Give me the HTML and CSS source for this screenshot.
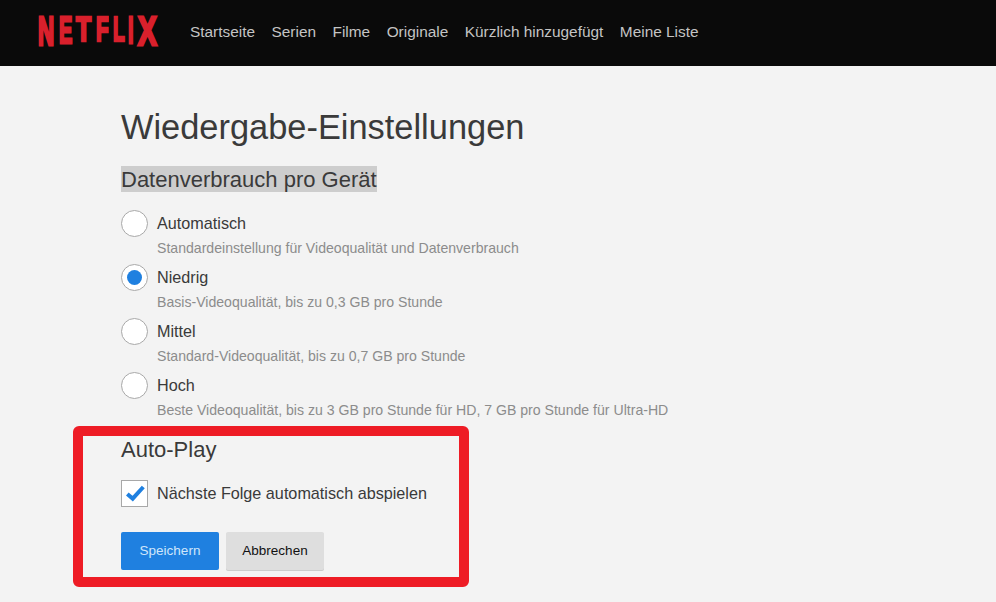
FILE: index.html
```html
<!DOCTYPE html>
<html lang="de">

<head>
    <meta charset="UTF-8">
    <title>Wiedergabe-Einstellungen</title>
    <link rel="stylesheet" href="styles.css">
</head>

<body>

    <header class="topbar">
        <div class="logo"><span class="l-n">N</span><span class="l-e">E</span><span class="l-t">T</span><span class="l-f">F</span><span class="l-l">L</span><span class="l-i">I</span><span class="l-x">X</span></div>
        <nav class="nav">
            <a href="#">Startseite</a>
            <a href="#">Serien</a>
            <a href="#">Filme</a>
            <a href="#">Originale</a>
            <a href="#">Kürzlich hinzugefügt</a>
            <a href="#">Meine Liste</a>
        </nav>
    </header>

    <main class="content">
        <h1>Wiedergabe-Einstellungen</h1>
        <h2><span class="selected">Datenverbrauch pro Gerät</span></h2>

        <div class="options">
            <div class="option">
                <span class="radio"></span>
                <div>
                    <div class="option-name">Automatisch</div>
                    <div class="option-desc">Standardeinstellung für Videoqualität und Datenverbrauch</div>
                </div>
            </div>
            <div class="option">
                <span class="radio checked"></span>
                <div>
                    <div class="option-name">Niedrig</div>
                    <div class="option-desc">Basis-Videoqualität, bis zu 0,3 GB pro Stunde</div>
                </div>
            </div>
            <div class="option">
                <span class="radio"></span>
                <div>
                    <div class="option-name">Mittel</div>
                    <div class="option-desc">Standard-Videoqualität, bis zu 0,7 GB pro Stunde</div>
                </div>
            </div>
            <div class="option">
                <span class="radio"></span>
                <div>
                    <div class="option-name">Hoch</div>
                    <div class="option-desc">Beste Videoqualität, bis zu 3 GB pro Stunde für HD, 7 GB pro Stunde für Ultra-HD</div>
                </div>
            </div>
        </div>

        <h2 class="autoplay-title">Auto-Play</h2>
        <div class="autoplay">
            <span class="checkbox">
                <svg width="25" height="25" viewBox="0 0 25 25">
                    <path d="M5.3 13l5.4 4.6L21.3 6" fill="none" stroke="#1f80e0" stroke-width="4"/>
                </svg>
            </span>
            <span class="option-name">Nächste Folge automatisch abspielen</span>
        </div>

        <div class="buttons">
            <button type="button" class="btn btn-save">Speichern</button>
            <button type="button" class="btn btn-cancel">Abbrechen</button>
        </div>
    </main>

    <div class="highlight"></div>

</body>

</html>
```

FILE: styles.css
```css
* {
    box-sizing: border-box;
}

body {
    font-family: "Liberation Sans", Arial, sans-serif;
    background-color: #f3f3f3;
    margin: 0;
    padding: 0;
    height: 602px;
    overflow: hidden;
    position: relative;
}

.topbar {
    height: 66px;
    background-color: #0a0a0a;
    display: flex;
    align-items: center;
    padding-left: 38px;
}

.logo {
    width: 119px;
    height: 34px;
    margin-right: 33px;
    margin-top: -5px;
    color: #d9202c;
    -webkit-text-stroke: 3px #d9202c;
    font-size: 40px;
    line-height: 34px;
    font-weight: bold;
    white-space: nowrap;
    display: flex;
    justify-content: space-between;
    align-items: flex-start;
}

/* the logo is curved: the ends are taller than the middle */
.logo span {
    display: block;
    transform-origin: left top;
}

.l-n {
    width: 17px;
    transform: scale(0.56, 1);
}

.l-e {
    width: 14px;
    transform: scale(0.5, 0.94);
}

.l-t {
    width: 16px;
    transform: scale(0.62, 0.88);
}

.l-f {
    width: 13px;
    transform: scale(0.52, 0.88);
}

.l-l {
    width: 12px;
    transform: scale(0.48, 0.88);
}

.l-i {
    width: 6px;
    transform: scale(0.5, 0.94);
}

.l-x {
    width: 19px;
    transform: scale(0.7, 1);
}

.nav {
    display: flex;
    gap: 16.5px;
    margin-top: -3px;
}

.nav a {
    color: #c4c4c4;
    font-size: 15.4px;
    text-decoration: none;
}

.content {
    padding: 39px 0 0 121px;
}

h1 {
    margin: 0;
    font-size: 34.4px;
    line-height: 44px;
    font-weight: normal;
    color: #3a3a3a;
}

h2 {
    margin: 0;
    font-size: 22px;
    font-weight: normal;
    color: #3a3a3a;
}

.selected {
    display: inline-block;
    margin-top: 17px;
    height: 26px;
    line-height: 28px;
    background-color: #cdcdcd;
}

.options {
    margin-top: 17px;
}

.option {
    display: flex;
    gap: 9px;
    height: 54px;
}

.radio {
    width: 27px;
    height: 27px;
    border-radius: 50%;
    border: 1px solid #a8a8a8;
    background-color: #fff;
    display: flex;
    align-items: center;
    justify-content: center;
}

.radio.checked::after {
    content: "";
    width: 15px;
    height: 15px;
    border-radius: 50%;
    background-color: #1f80e0;
}

.option-name {
    font-size: 16.2px;
    line-height: 18px;
    margin-top: 4px;
    color: #3a3a3a;
}

.option-desc {
    font-size: 14.1px;
    line-height: 16px;
    margin-top: 8px;
    color: #8c8c8c;
}

.autoplay-title {
    margin-top: 11px;
    line-height: 26px;
}

.autoplay {
    display: flex;
    gap: 9px;
    margin-top: 17px;
}

.checkbox {
    width: 27px;
    height: 27px;
    border: 1px solid #a8a8a8;
    background-color: #fff;
}

.checkbox svg {
    display: block;
}

.buttons {
    display: flex;
    gap: 7px;
    margin-top: 25px;
}

.btn {
    width: 98px;
    height: 38px;
    padding: 0 0 2px;
    border: none;
    border-radius: 2px;
    font-family: inherit;
    font-size: 13.5px;
    cursor: pointer;
}

.btn-save {
    background-color: #1f80e0;
    color: #cfe6fb;
}

.btn-cancel {
    background-color: #dedede;
    color: #111;
    box-shadow: 0 1px 0 #ccc;
}

/* red frame over the content */
.highlight {
    position: absolute;
    left: 73px;
    top: 426px;
    width: 396px;
    height: 161px;
    border: 10px solid #ee1c25;
    border-radius: 6px;
}
```
